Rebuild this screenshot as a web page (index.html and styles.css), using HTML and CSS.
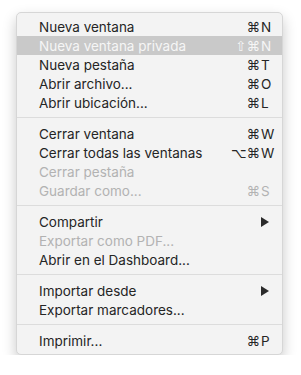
FILE: index.html
```html
<!DOCTYPE html>
<html lang="es">
<head>
    <meta charset="UTF-8">
    <meta name="viewport" content="width=device-width, initial-scale=1.0">
    <title>Archivo</title>
    <link rel="stylesheet" href="styles.css">
</head>
<body>
    <div class="menu">
        <div class="item"><span class="label">Nueva ventana</span><span class="keys"><span class="mods">⌘</span><span class="key">N</span></span></div>
        <div class="item selected"><span class="label">Nueva ventana privada</span><span class="keys"><span class="mods">⇧⌘</span><span class="key">N</span></span></div>
        <div class="item"><span class="label">Nueva pestaña</span><span class="keys"><span class="mods">⌘</span><span class="key">T</span></span></div>
        <div class="item"><span class="label">Abrir archivo...</span><span class="keys"><span class="mods">⌘</span><span class="key">O</span></span></div>
        <div class="item"><span class="label">Abrir ubicación...</span><span class="keys"><span class="mods">⌘</span><span class="key">L</span></span></div>
        <div class="sep"></div>
        <div class="item"><span class="label">Cerrar ventana</span><span class="keys"><span class="mods">⌘</span><span class="key">W</span></span></div>
        <div class="item"><span class="label">Cerrar todas las ventanas</span><span class="keys"><span class="mods">⌥⌘</span><span class="key">W</span></span></div>
        <div class="item disabled"><span class="label">Cerrar pestaña</span></div>
        <div class="item disabled"><span class="label">Guardar como...</span><span class="keys"><span class="mods">⌘</span><span class="key">S</span></span></div>
        <div class="sep"></div>
        <div class="item"><span class="label">Compartir</span><svg class="arrow" width="8" height="10" viewBox="0 0 8 10"><path d="M0 0 L8 5 L0 10 Z"/></svg></div>
        <div class="item disabled"><span class="label">Exportar como PDF...</span></div>
        <div class="item"><span class="label">Abrir en el Dashboard...</span></div>
        <div class="sep"></div>
        <div class="item"><span class="label">Importar desde</span><svg class="arrow" width="8" height="10" viewBox="0 0 8 10"><path d="M0 0 L8 5 L0 10 Z"/></svg></div>
        <div class="item"><span class="label">Exportar marcadores...</span></div>
        <div class="sep"></div>
        <div class="item"><span class="label">Imprimir...</span><span class="keys"><span class="mods">⌘</span><span class="key">P</span></span></div>
    </div>
</body>
</html>
```
FILE: styles.css
```css
body {
    margin: 0;
    padding: 12px 0 0 16px;
    background: #ffffff;
    font-family: Inter, "Liberation Sans", sans-serif;
}
.menu {
    width: 267px;
    box-sizing: border-box;
    padding: 4px 0;
    background: #f3f3f3;
    border: 1px solid #d6d6d6;
    border-radius: 5px;
    box-shadow: 0 6px 14px rgba(0, 0, 0, 0.22);
}
.item {
    display: flex;
    align-items: center;
    height: 19px;
    padding: 0 6px 0 22px;
    font-size: 13.5px;
    color: #252525;
}
.item.selected {
    background: #c9c9c9;
    color: #f6f6f6;
}
.item.disabled {
    color: #b2b2b2;
}
.label {
    flex: 1;
    white-space: nowrap;
}
.keys {
    display: flex;
    align-items: baseline;
}
.mods {
    font-family: "DejaVu Sans", sans-serif;
    font-size: 13.5px;
    text-align: right;
    margin-right: 1px;
}
.key {
    width: 15px;
}
.arrow {
    margin-right: 7px;
    fill: #2a2a2a;
}
.sep {
    height: 1px;
    margin: 5px 0 6px;
    background: #dcdcdc;
}
```
